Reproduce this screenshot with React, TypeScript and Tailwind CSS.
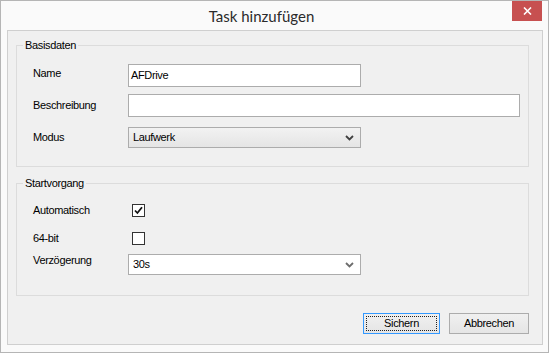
import React from 'react';

function Chevron({ color }: { color: string }) {
  return (
    <svg width="9" height="6" viewBox="0 0 9 6" className="block">
      <path d="M1 1 L4.5 4.5 L8 1" fill="none" stroke={color} strokeWidth="1.8" />
    </svg>
  );
}

function Combo({ value, editable, width }: { value: string; editable?: boolean; width: string }) {
  return (
    <div
      className={`${width} h-[21px] border border-[#acacac] flex items-center justify-between pl-[4px] pr-[6px] ${
        editable ? 'bg-white pl-[2px]' : 'bg-gradient-to-b from-[#f2f2f2] to-[#e5e5e5]'
      }`}
    >
      <span>{value}</span>
      <Chevron color={editable ? '#6d6d6d' : '#404040'} />
    </div>
  );
}

function TextBox({ value, width }: { value?: string; width: string }) {
  return (
    <div className={`${width} h-[23px] bg-white border border-[#acacac] flex items-center pl-[2px]`}>
      {value}
    </div>
  );
}

function CheckBox({ checked }: { checked?: boolean }) {
  return (
    <div className="ml-[4px] w-[13px] h-[13px] border border-[#333333] bg-white flex items-center justify-center">
      {checked && (
        <svg width="9" height="9" viewBox="0 0 9 9" className="block">
          <path d="M1 4.5 L3.4 7 L8 1.2" fill="none" stroke="#111" strokeWidth="1.8" />
        </svg>
      )}
    </div>
  );
}

export default function App() {
  return (
    <div className="w-[549px] h-[353px] bg-[#fafafa] border border-[#b5b5b5] flex flex-col font-['Liberation_Sans',Arial,sans-serif] text-[11px] tracking-[-0.35px] text-black">
      {/* Titelleiste */}
      <div className="relative h-[29px] shrink-0 flex items-center justify-center pr-[26px]">
        <span className="font-['Lato',sans-serif] text-[15px] tracking-normal text-[#2b2b2b] mt-[1px]">
          Task hinzufügen
        </span>
        <button className="absolute top-0 right-[6px] w-[30px] h-[20px] bg-[#c75050] flex items-center justify-center">
          <svg width="9" height="8" viewBox="0 0 9 8" className="block">
            <path d="M1 0.5 L8 7.5 M8 0.5 L1 7.5" stroke="#ffffff" strokeWidth="1.6" />
          </svg>
        </button>
      </div>

      {/* Client-Bereich */}
      <div className="flex-1 ml-[6px] mr-[5px] mb-[7px] border border-[#cfcfcf] bg-[#f0f0f0] pt-[8px]">
        <fieldset className="ml-[8px] w-[513px] border border-[#dcdcdc] pb-[18px]">
          <legend className="ml-[6px] px-[2px] leading-[13px]">Basisdaten</legend>
          <div className="pl-[16px] flex flex-col">
            <div className="mt-[12px] flex items-center">
              <span className="w-[95px] -mt-[4px]">Name</span>
              <TextBox value="AFDrive" width="w-[233px]" />
            </div>
            <div className="mt-[7px] flex items-center">
              <span className="w-[95px]">Beschreibung</span>
              <TextBox width="w-[392px]" />
            </div>
            <div className="mt-[10px] flex items-center">
              <span className="w-[95px]">Modus</span>
              <Combo value="Laufwerk" width="w-[233px]" />
            </div>
          </div>
        </fieldset>

        <fieldset className="mt-[10px] ml-[8px] w-[513px] border border-[#dcdcdc] pb-[20px]">
          <legend className="ml-[6px] px-[2px] leading-[13px]">Startvorgang</legend>
          <div className="pl-[16px] flex flex-col">
            <div className="mt-[14px] flex items-center h-[13px]">
              <span className="w-[95px]">Automatisch</span>
              <CheckBox checked />
            </div>
            <div className="mt-[15px] flex items-center h-[13px]">
              <span className="w-[95px]">64-bit</span>
              <CheckBox />
            </div>
            <div className="mt-[9px] flex items-start">
              <span className="w-[95px] leading-[13px]">Verzögerung</span>
              <Combo value="30s" editable width="w-[233px]" />
            </div>
          </div>
        </fieldset>

        <div className="mt-[17px] ml-[8px] w-[513px] flex justify-end gap-[9px]">
          <button className="w-[77px] h-[21px] border border-[#3399ff] bg-gradient-to-b from-[#f0f0f0] to-[#e5e5e5] p-[2px]">
            <span className="w-full h-full border border-dotted border-[#222] flex items-center justify-center">
              Sichern
            </span>
          </button>
          <button className="w-[80px] h-[21px] border border-[#acacac] bg-gradient-to-b from-[#f0f0f0] to-[#e5e5e5] flex items-center justify-center">
            Abbrechen
          </button>
        </div>
      </div>
    </div>
  );
}
